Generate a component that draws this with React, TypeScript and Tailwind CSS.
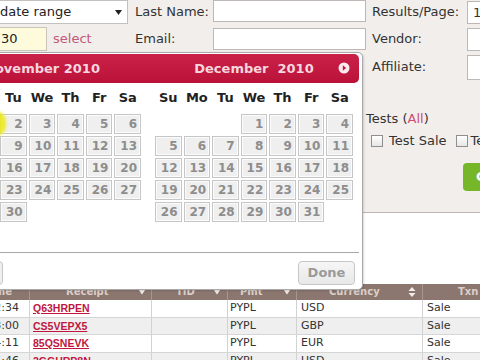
import React from "react";

type Day = number | null;

const nov: Day[][] = [
  [null, 1, 2, 3, 4, 5, 6],
  [7, 8, 9, 10, 11, 12, 13],
  [14, 15, 16, 17, 18, 19, 20],
  [21, 22, 23, 24, 25, 26, 27],
  [28, 29, 30, null, null, null, null],
];
const dec: Day[][] = [
  [null, null, null, 1, 2, 3, 4],
  [5, 6, 7, 8, 9, 10, 11],
  [12, 13, 14, 15, 16, 17, 18],
  [19, 20, 21, 22, 23, 24, 25],
  [26, 27, 28, 29, 30, 31, null],
];
const dayNames = ["Su", "Mo", "Tu", "We", "Th", "Fr", "Sa"];

const rows = [
  { t: "11/30 12:34", r: "Q63HRPEN", p: "PYPL", c: "USD", x: "Sale" },
  { t: "11/30 13:00", r: "CS5VEPX5", p: "PYPL", c: "GBP", x: "Sale" },
  { t: "11/30 14:11", r: "85QSNEVK", p: "PYPL", c: "EUR", x: "Sale" },
  { t: "11/30 15:46", r: "2GGHRP8N", p: "PYPL", c: "USD", x: "Sale" },
];

function Month({ weeks }: { weeks: Day[][] }) {
  return (
    <div className="w-[200px] shrink-0">
      <div className="grid grid-cols-7 h-[30px] items-center">
        {dayNames.map((d) => (
          <div key={d} className="text-center text-[13px] font-bold text-[#222]">
            {d}
          </div>
        ))}
      </div>
      {weeks.map((w, i) => (
        <div key={i} className="grid grid-cols-7 h-[22px] items-center">
          {w.map((d, j) => (
            <div key={j} className="px-[1px]">
              {d !== null ? (
                <div className="h-[20px] border border-[#c6c6c6] bg-[#efefef] shadow-[inset_0_0_0_1px_#fbfbfb] text-right pr-[3px] text-[12px] leading-[18px] font-bold text-[#8d8d8d]">
                  {d}
                </div>
              ) : null}
            </div>
          ))}
        </div>
      ))}
    </div>
  );
}

function Checkbox() {
  return <div className="w-[12px] h-[12px] border border-[#8f8f8f] bg-gradient-to-b from-[#ffffff] to-[#e6e6e6] shrink-0" />;
}

function SortDown() {
  return (
    <svg width="8" height="6" viewBox="0 0 8 6" className="shrink-0">
      <path d="M0.5 0.5 L7.5 0.5 L4 5.5 Z" fill="#f2ecea" />
    </svg>
  );
}

function SortBoth() {
  return (
    <svg width="8" height="10" viewBox="0 0 8 10" className="shrink-0">
      <path d="M0.5 4 L7.5 4 L4 0 Z" fill="#f2ecea" />
      <path d="M0.5 6 L7.5 6 L4 10 Z" fill="#f2ecea" />
    </svg>
  );
}

export default function App() {
  return (
    <div className="relative w-[480px] h-[360px] overflow-hidden bg-white font-['DejaVu_Sans',Verdana,sans-serif] text-[#333]">
      {/* Filter form */}
      <div className="h-[213px] bg-[#f2eeec] border-b border-[#bcb5b2] flex">
        <div className="w-[366px] shrink-0 flex flex-col">
          <div className="flex h-[24px]">
            <div className="w-[135px] shrink-0">
              <div className="ml-[-6px] w-[134px] h-[24px] bg-white border border-[#c4c0be] flex items-center pl-[5px] pr-[5px] text-[13px] text-[#222]">
                <span className="flex-1">date range</span>
                <svg width="7" height="5" viewBox="0 0 7 5">
                  <path d="M0 0 L7 0 L3.5 5 Z" fill="#222" />
                </svg>
              </div>
            </div>
            <div className="w-[78px] shrink-0 flex items-center text-[13px]">Last Name:</div>
            <div className="w-[153px] h-[22px] bg-white border border-[#bdb8b6] shrink-0" />
          </div>
          <div className="flex h-[24px] mt-[3px]">
            <div className="w-[135px] shrink-0 flex items-center">
              <div className="ml-[-1px] w-[48px] h-[24px] bg-[#fdfbdc] border border-[#c9c5b8] flex items-center pl-[1px] text-[13px] text-[#222]">
                30
              </div>
              <span className="ml-[6px] text-[13px] text-[#c2587a]">select</span>
            </div>
            <div className="w-[78px] shrink-0 flex items-center text-[13px]">Email:</div>
            <div className="w-[153px] h-[22px] mt-[1px] bg-white border border-[#bdb8b6] shrink-0" />
          </div>
        </div>
        <div className="flex-1 flex flex-col text-[13px]">
          <div className="flex h-[24px] items-center">
            <div className="w-[101px] pl-[6px] shrink-0">Results/Page:</div>
            <div className="w-[30px] h-[23px] bg-white border border-[#bdb8b6] pl-[5px] leading-[21px] shrink-0">10</div>
          </div>
          <div className="flex h-[24px] mt-[3px] items-center">
            <div className="w-[101px] pl-[6px] shrink-0">Vendor:</div>
            <div className="w-[30px] h-[23px] bg-white border border-[#bdb8b6] shrink-0" />
          </div>
          <div className="flex h-[26px] mt-[3px] items-center">
            <div className="w-[101px] pl-[6px] shrink-0">Affiliate:</div>
            <div className="w-[30px] h-[25px] bg-white border border-[#bdb8b6] shrink-0" />
          </div>
          <div className="mt-[31px] h-[16px] leading-[16px] text-[13px] whitespace-nowrap">
            Tests (<span className="text-[#c94d72]">All</span>)
          </div>
          <div className="mt-[6px] h-[15px] flex items-center pl-[5px] whitespace-nowrap">
            <Checkbox />
            <span className="ml-[6px]">Test Sale</span>
            <div className="ml-[9px]">
              <Checkbox />
            </div>
            <span className="ml-[3px]">Test Refund</span>
          </div>
          <div className="mt-[15px] ml-[97px] h-[28px] w-[60px] rounded-[4px] bg-[#76b72a] text-white font-bold text-[13px] leading-[28px] pl-[13px] shrink-0">
            Go
          </div>
        </div>
      </div>

      <div className="h-[71px]" />

      {/* Table */}
      <div className="flex h-[16px] bg-[#8b776f] text-[10px] font-bold text-[#dccfc9] leading-[16px]">
        <div className="ml-[-60px] w-[90px] shrink-0 border-r border-[#a8968e] text-right pr-[17px]">Time</div>
        <div className="w-[122px] shrink-0 border-r border-[#a8968e] flex items-center pl-[36px] pr-[5px]">
          <span className="flex-1">Receipt</span>
          <SortDown />
        </div>
        <div className="w-[76px] shrink-0 border-r border-[#a8968e] flex items-center pl-[24px] pr-[6px]">
          <span className="flex-1">TID</span>
          <SortDown />
        </div>
        <div className="w-[69px] shrink-0 border-r border-[#a8968e] flex items-center pl-[12px] pr-[5px]">
          <span className="flex-1">Pmt</span>
          <SortDown />
        </div>
        <div className="w-[126px] shrink-0 border-r border-[#a8968e] flex items-center pl-[32px] pr-[6px]">
          <span className="flex-1">Currency</span>
          <SortBoth />
        </div>
        <div className="w-[120px] shrink-0 pl-[35px]">Txn Type</div>
      </div>
      {rows.map((r, i) => (
        <div
          key={i}
          className={`flex h-[17.5px] border-b border-[#d6d6d6] text-[11px] leading-[16.5px] ${i % 2 === 1 ? "bg-[#efefef]" : "bg-white"}`}
        >
          <div className="ml-[-60px] w-[90px] shrink-0 border-r border-[#d2d2d2] text-right pr-[10px] whitespace-nowrap">{r.t}</div>
          <div className="w-[122px] shrink-0 border-r border-[#d2d2d2] pl-[3px] font-['Liberation_Sans',Arial,sans-serif] font-bold text-[10.5px] text-[#c0173f] underline">
            {r.r}
          </div>
          <div className="w-[76px] shrink-0 border-r border-[#d2d2d2]" />
          <div className="w-[69px] shrink-0 border-r border-[#d2d2d2] pl-[2px]">{r.p}</div>
          <div className="w-[126px] shrink-0 border-r border-[#d2d2d2] pl-[4px]">{r.c}</div>
          <div className="w-[120px] shrink-0 pl-[4px]">{r.x}</div>
        </div>
      ))}

      {/* Datepicker popup */}
      <div className="absolute left-[-62px] top-[52px] w-[425px] h-[238px] bg-white border border-[#a9a9a9] rounded-[5px] px-[3px] pt-[1px] shadow-[1px_1px_2px_rgba(0,0,0,0.15)]">
        <div className="relative h-[29px] rounded-[5px] bg-gradient-to-b from-[#c92148] to-[#bb1139] flex gap-[12px] items-center text-[13px] font-bold text-[#f6d6de]">
          <div className="w-[200px] text-center whitespace-nowrap">November 2010</div>
          <div className="w-[200px] text-center whitespace-nowrap">December&nbsp; 2010</div>
          <svg width="12" height="12" viewBox="0 0 12 12" className="absolute right-[9px] top-[8px]">
            <circle cx="6" cy="6" r="5.5" fill="#fbeaee" />
            <path d="M4.8 3.3 L8.2 6 L4.8 8.7 Z" fill="#bf163e" />
          </svg>
        </div>
        <div className="flex gap-[12px]">
          <Month weeks={nov} />
          <Month weeks={dec} />
        </div>
        <div className="mt-[29px] border-t border-[#a8a8a8] flex justify-between pt-[8px]">
          <div className="ml-[1px] w-[60px] h-[24px] rounded-[4px] border border-[#c6c6c6] bg-[#efefef] text-center text-[13px] font-bold text-[#9a9a9a] leading-[22px]">
            Today
          </div>
          <div className="mr-[4px] w-[57px] h-[24px] rounded-[4px] border border-[#c6c6c6] bg-gradient-to-b from-[#f6f6f6] to-[#e8e8e8] text-center text-[13px] font-bold text-[#9a9a9a] leading-[22px]">
            Done
          </div>
        </div>
      </div>

      {/* Screencast cursor highlight */}
      <div className="absolute left-[-14px] top-[111px] w-[20px] h-[25px] rounded-full bg-[#ecea1e] blur-[1.5px] opacity-90" />
    </div>
  );
}
